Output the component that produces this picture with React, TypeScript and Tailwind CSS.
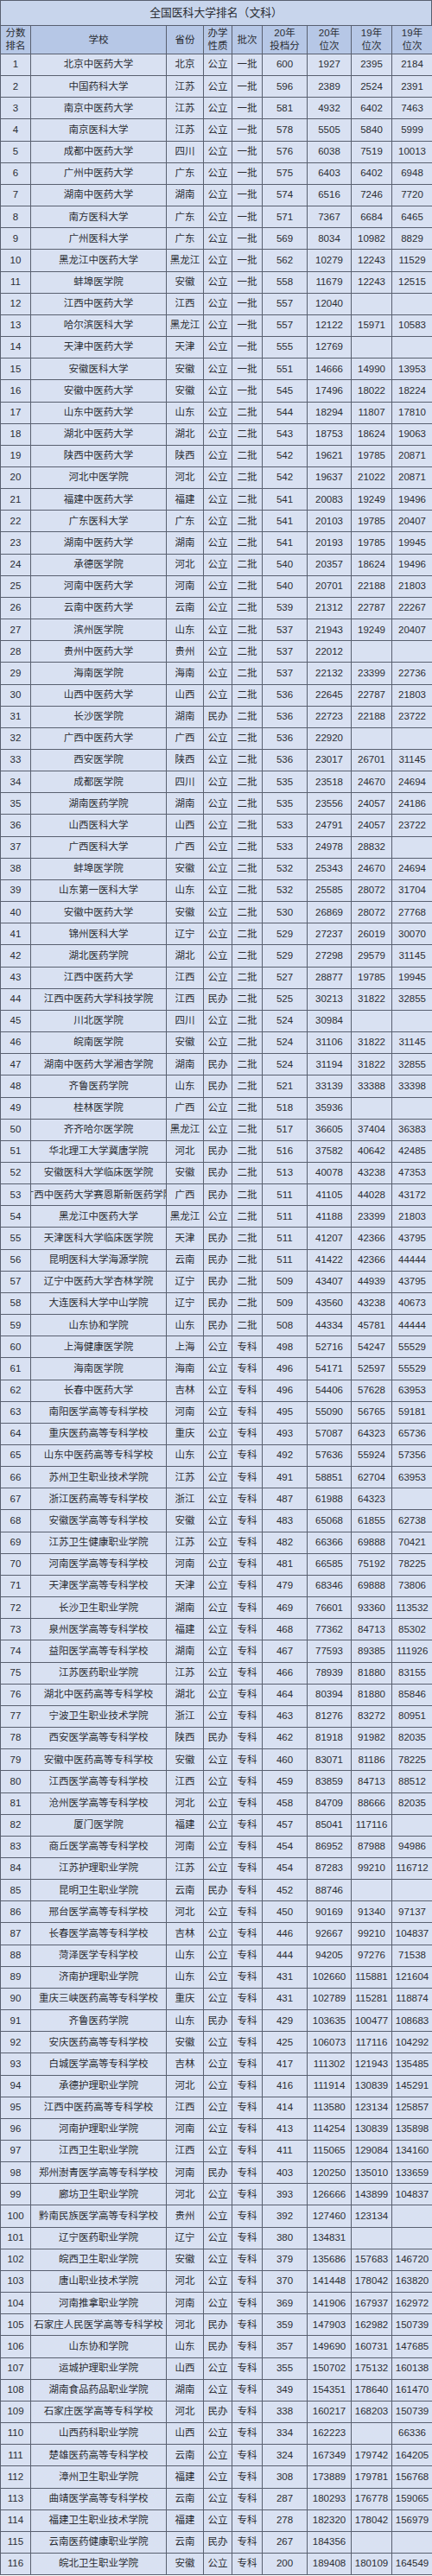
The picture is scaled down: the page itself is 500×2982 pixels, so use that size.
import React from 'react';

const rows = `1|北京中医药大学|北京|公立|一批|600|1927|2395|2184
2|中国药科大学|江苏|公立|一批|596|2389|2524|2391
3|南京中医药大学|江苏|公立|一批|581|4932|6402|7463
4|南京医科大学|江苏|公立|一批|578|5505|5840|5999
5|成都中医药大学|四川|公立|一批|576|6038|7519|10013
6|广州中医药大学|广东|公立|一批|575|6403|6402|6948
7|湖南中医药大学|湖南|公立|一批|574|6516|7246|7720
8|南方医科大学|广东|公立|一批|571|7367|6684|6465
9|广州医科大学|广东|公立|一批|569|8034|10982|8829
10|黑龙江中医药大学|黑龙江|公立|一批|562|10279|12243|11529
11|蚌埠医学院|安徽|公立|一批|558|11679|12243|12515
12|江西中医药大学|江西|公立|一批|557|12040||
13|哈尔滨医科大学|黑龙江|公立|一批|557|12122|15971|10583
14|天津中医药大学|天津|公立|一批|555|12769||
15|安徽医科大学|安徽|公立|一批|551|14666|14990|13953
16|安徽中医药大学|安徽|公立|一批|545|17496|18022|18224
17|山东中医药大学|山东|公立|二批|544|18294|11807|17810
18|湖北中医药大学|湖北|公立|二批|543|18753|18624|19063
19|陕西中医药大学|陕西|公立|二批|542|19621|19785|20871
20|河北中医学院|河北|公立|二批|542|19637|21022|20871
21|福建中医药大学|福建|公立|二批|541|20083|19249|19496
22|广东医科大学|广东|公立|二批|541|20103|19785|20407
23|湖南中医药大学|湖南|公立|二批|541|20193|19785|19945
24|承德医学院|河北|公立|二批|540|20357|18624|19496
25|河南中医药大学|河南|公立|二批|540|20701|22188|21803
26|云南中医药大学|云南|公立|二批|539|21312|22787|22267
27|滨州医学院|山东|公立|二批|537|21943|19249|20407
28|贵州中医药大学|贵州|公立|二批|537|22012||
29|海南医学院|海南|公立|二批|537|22132|23399|22736
30|山西中医药大学|山西|公立|二批|536|22645|22787|21803
31|长沙医学院|湖南|民办|二批|536|22723|22188|23722
32|广西中医药大学|广西|公立|二批|536|22920||
33|西安医学院|陕西|公立|二批|536|23017|26701|31145
34|成都医学院|四川|公立|二批|535|23518|24670|24694
35|湖南医药学院|湖南|公立|二批|535|23556|24057|24186
36|山西医科大学|山西|公立|二批|533|24791|24057|23722
37|广西医科大学|广西|公立|二批|533|24978|28832|
38|蚌埠医学院|安徽|公立|二批|532|25343|24670|24694
39|山东第一医科大学|山东|公立|二批|532|25585|28072|31704
40|安徽中医药大学|安徽|公立|二批|530|26869|28072|27768
41|锦州医科大学|辽宁|公立|二批|529|27237|26019|30070
42|湖北医药学院|湖北|公立|二批|529|27298|29579|31145
43|江西中医药大学|江西|公立|二批|527|28877|19785|19945
44|江西中医药大学科技学院|江西|民办|二批|525|30213|31822|32855
45|川北医学院|四川|公立|二批|524|30984||
46|皖南医学院|安徽|公立|二批|524|31106|31822|31145
47|湖南中医药大学湘杏学院|湖南|民办|二批|524|31194|31822|32855
48|齐鲁医药学院|山东|民办|二批|521|33139|33388|33398
49|桂林医学院|广西|公立|二批|518|35936||
50|齐齐哈尔医学院|黑龙江|公立|二批|517|36605|37404|36383
51|华北理工大学冀唐学院|河北|民办|二批|516|37582|40642|42485
52|安徽医科大学临床医学院|安徽|民办|二批|513|40078|43238|47353
53|广西中医药大学赛恩斯新医药学院|广西|民办|二批|511|41105|44028|43172
54|黑龙江中医药大学|黑龙江|公立|二批|511|41188|23399|21803
55|天津医科大学临床医学院|天津|民办|二批|511|41207|42366|43795
56|昆明医科大学海源学院|云南|民办|二批|511|41422|42366|44444
57|辽宁中医药大学杏林学院|辽宁|民办|二批|509|43407|44939|43795
58|大连医科大学中山学院|辽宁|民办|二批|509|43560|43238|40673
59|山东协和学院|山东|民办|二批|508|44334|45781|44444
60|上海健康医学院|上海|公立|专科|498|52716|54247|55529
61|海南医学院|海南|公立|专科|496|54171|52597|55529
62|长春中医药大学|吉林|公立|专科|496|54406|57628|63953
63|南阳医学高等专科学校|河南|公立|专科|495|55090|56765|59181
64|重庆医药高等专科学校|重庆|公立|专科|493|57087|64323|65736
65|山东中医药高等专科学校|山东|公立|专科|492|57636|55924|57356
66|苏州卫生职业技术学院|江苏|公立|专科|491|58851|62704|63953
67|浙江医药高等专科学校|浙江|公立|专科|487|61988|64323|
68|安徽医学高等专科学校|安徽|公立|专科|483|65068|61855|62738
69|江苏卫生健康职业学院|江苏|公立|专科|482|66366|69888|70421
70|河南医学高等专科学校|河南|公立|专科|481|66585|75192|78225
71|天津医学高等专科学校|天津|公立|专科|479|68346|69888|73806
72|长沙卫生职业学院|湖南|公立|专科|469|76601|93360|113532
73|泉州医学高等专科学校|福建|公立|专科|468|77362|84713|85302
74|益阳医学高等专科学校|湖南|公立|专科|467|77593|89385|111926
75|江苏医药职业学院|江苏|公立|专科|466|78939|81880|83155
76|湖北中医药高等专科学校|湖北|公立|专科|464|80394|81880|85846
77|宁波卫生职业技术学院|浙江|公立|专科|463|81276|83272|80951
78|西安医学高等专科学校|陕西|民办|专科|462|81918|91982|82035
79|安徽中医药高等专科学校|安徽|公立|专科|460|83071|81186|78225
80|江西医学高等专科学校|江西|公立|专科|459|83859|84713|88512
81|沧州医学高等专科学校|河北|公立|专科|458|84709|88666|82035
82|厦门医学院|福建|公立|专科|457|85041|117116|
83|商丘医学高等专科学校|河南|公立|专科|454|86952|87988|94986
84|江苏护理职业学院|江苏|公立|专科|454|87283|99210|116712
85|昆明卫生职业学院|云南|民办|专科|452|88746||
86|邢台医学高等专科学校|河北|公立|专科|450|90169|91340|97137
87|长春医学高等专科学校|吉林|公立|专科|446|92667|99210|104837
88|菏泽医学专科学校|山东|公立|专科|444|94205|97276|71538
89|济南护理职业学院|山东|公立|专科|431|102660|115881|121604
90|重庆三峡医药高等专科学校|重庆|公立|专科|431|102789|115281|118874
91|齐鲁医药学院|山东|民办|专科|429|103635|100477|108683
92|安庆医药高等专科学校|安徽|公立|专科|425|106073|117116|104292
93|白城医学高等专科学校|吉林|公立|专科|417|111302|121943|135485
94|承德护理职业学院|河北|公立|专科|416|111914|130839|145291
95|江西中医药高等专科学校|江西|公立|专科|414|113580|123134|125857
96|河南护理职业学院|河南|公立|专科|413|114254|130839|135898
97|江西卫生职业学院|江西|公立|专科|411|115065|129084|134160
98|郑州澍青医学高等专科学校|河南|民办|专科|403|120250|135010|133659
99|廊坊卫生职业学院|河北|公立|专科|393|126666|143899|104837
100|黔南民族医学高等专科学校|贵州|公立|专科|392|127460|123134|
101|辽宁医药职业学院|辽宁|公立|专科|380|134831||
102|皖西卫生职业学院|安徽|公立|专科|379|135686|157683|146720
103|唐山职业技术学院|河北|公立|专科|370|141448|178042|163820
104|河南推拿职业学院|河南|公立|专科|369|141906|167937|162972
105|石家庄人民医学高等专科学校|河北|民办|专科|359|147903|162982|150739
106|山东协和学院|山东|民办|专科|357|149690|160731|147685
107|运城护理职业学院|山西|公立|专科|355|150702|175132|160138
108|湖南食品药品职业学院|湖南|公立|专科|349|154351|178640|161470
109|石家庄医学高等专科学校|河北|民办|专科|338|160217|168203|150739
110|山西药科职业学院|山西|公立|专科|334|162223||66336
111|楚雄医药高等专科学校|云南|公立|专科|324|167349|179742|164205
112|漳州卫生职业学院|福建|公立|专科|308|173889|179781|156768
113|曲靖医学高等专科学校|云南|公立|专科|287|180293|176778|159065
114|福建卫生职业技术学院|福建|公立|专科|278|182320|178042|156979
115|云南医药健康职业学院|云南|民办|专科|267|184356||
116|皖北卫生职业学院|安徽|公立|专科|200|189408|180109|164549`
  .split('\n')
  .map((line) => line.split('|'));

const headers = [
  ['分数', '排名'],
  ['学校'],
  ['省份'],
  ['办学', '性质'],
  ['批次'],
  ['20年', '投档分'],
  ['20年', '位次'],
  ['19年', '位次'],
  ['19年', '位次'],
];

const cols = 'grid grid-cols-[35px_157px_43px_33px_35px_52px_51px_47px_47px]';
const cell =
  'flex items-center justify-center overflow-hidden whitespace-nowrap border-r border-b border-[#596070]';

export default function App() {
  return (
    <div className="w-[500px] bg-[#d9e1f2] font-['Liberation_Sans','Noto_Sans_CJK_SC',sans-serif] text-[#2a2d33]">
      <div className="border-l border-t border-[#596070]">
        <div className="flex h-[29px] items-center justify-center border-r border-b border-[#596070] bg-[#c8d5ec] text-[12.8px]">
          全国医科大学排名（文科）
        </div>

        <div className={`${cols} h-[33px] bg-[#b6c7e6] text-[11.5px] leading-[15px]`}>
          {headers.map((h, i) => (
            <div key={i} className={`${cell} flex-col`}>
              {h.map((t) => (
                <span key={t}>{t}</span>
              ))}
            </div>
          ))}
        </div>

        {rows.map((r) => (
          <div key={r[0]} className={`${cols} h-[25.16px] text-[11.5px]`}>
            {r.map((v, i) => (
              <div key={i} className={cell}>
                {v}
              </div>
            ))}
          </div>
        ))}
      </div>
    </div>
  );
}
